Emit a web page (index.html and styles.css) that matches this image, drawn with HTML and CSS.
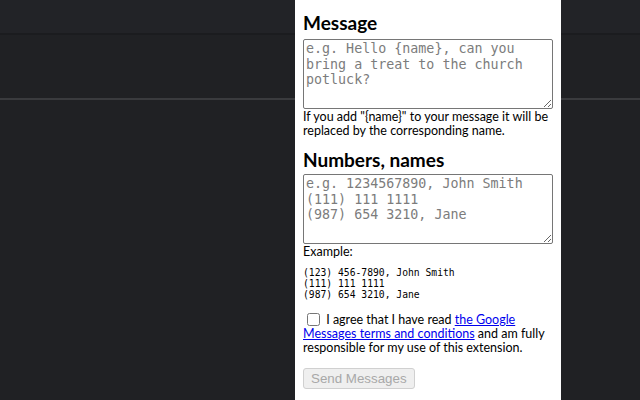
FILE: index.html
```html
<!DOCTYPE html>
<html>
<head>
<meta charset="utf-8">
<link rel="stylesheet" href="styles.css">
</head>
<body>
<div class="backdrop">
  <div class="topbar"></div>
  <div class="toolbar"></div>
  <div class="rest"></div>
</div>
<div class="panel">
  <h2 class="title first">Message</h2>
  <textarea class="field" placeholder="e.g. Hello {name}, can you bring a treat to the church potluck?"></textarea>
  <p class="help">If you add "{name}" to your message it will be replaced by the corresponding name.</p>
  <h2 class="title second">Numbers, names</h2>
  <textarea class="field" placeholder="e.g. 1234567890, John Smith
(111) 111 1111
(987) 654 3210, Jane"></textarea>
  <p class="example-label">Example:</p>
  <pre class="example">(123) 456-7890, John Smith
(111) 111 1111
(987) 654 3210, Jane</pre>
  <label class="agree"><input type="checkbox" class="check"> I agree that I have read <a href="#">the Google Messages terms and conditions</a> and am fully responsible for my use of this extension.</label>
  <button class="send" disabled>Send Messages</button>
</div>
</body>
</html>
```

FILE: styles.css
```css
html, body {
  margin: 0;
  padding: 0;
  height: 100%;
  overflow: hidden;
}
body {
  background: #202124;
  font-family: Lato, "Noto Sans", sans-serif;
}
.backdrop {
  display: flex;
  flex-direction: column;
  height: 100%;
}
.topbar {
  height: 33px;
  background: #222327;
  border-bottom: 2px solid #1b1c1f;
}
.toolbar {
  height: 63px;
  background: #202124;
  border-bottom: 2px solid #3a3b3e;
}
.rest {
  flex: 1;
  background: #202124;
}
.panel {
  position: absolute;
  left: 295px;
  top: 0;
  width: 250px;
  height: 400px;
  padding: 0 8px;
  background: #ffffff;
  color: #000;
}
.title {
  font-size: 19px;
  font-weight: 700;
  line-height: 22px;
  margin: 0;
}
.title.first {
  margin-top: 12px;
  margin-bottom: 5px;
}
.title.second {
  margin-top: 12px;
  margin-bottom: 3px;
}
.field {
  display: block;
  box-sizing: border-box;
  width: 250px;
  height: 70px;
  margin: 0;
  padding: 1px 2px;
  border: 1px solid #767676;
  border-radius: 2px;
  font-family: "DejaVu Sans Mono", monospace;
  font-size: 13.33px;
  line-height: 15.5px;
  resize: vertical;
}
.field::placeholder {
  color: #7c7c7c;
}
.help {
  margin: 1px 0 0;
  font-size: 12.5px;
  line-height: 13.5px;
}
.example-label {
  margin: 1px 0 0;
  font-size: 12.5px;
  line-height: 14px;
}
.example {
  margin: 8px 0 0;
  font-family: "DejaVu Sans Mono", monospace;
  font-size: 9.7px;
  line-height: 11px;
}
.agree {
  display: block;
  margin-top: 13px;
  font-size: 12.5px;
  line-height: 14px;
}
.agree a {
  color: #0000ee;
}
.check {
  width: 13px;
  height: 13px;
  margin: 0 3px 0 4px;
  vertical-align: -2px;
}
.send {
  display: block;
  margin-top: 13px;
  padding: 1px 7px;
  height: 21px;
  font-family: "Liberation Sans", Arial, sans-serif;
  font-size: 13.33px;
  color: #a8a8a8;
  background: #efefef;
  border: 1px solid #d0d0d0;
  border-radius: 3px;
}
```
